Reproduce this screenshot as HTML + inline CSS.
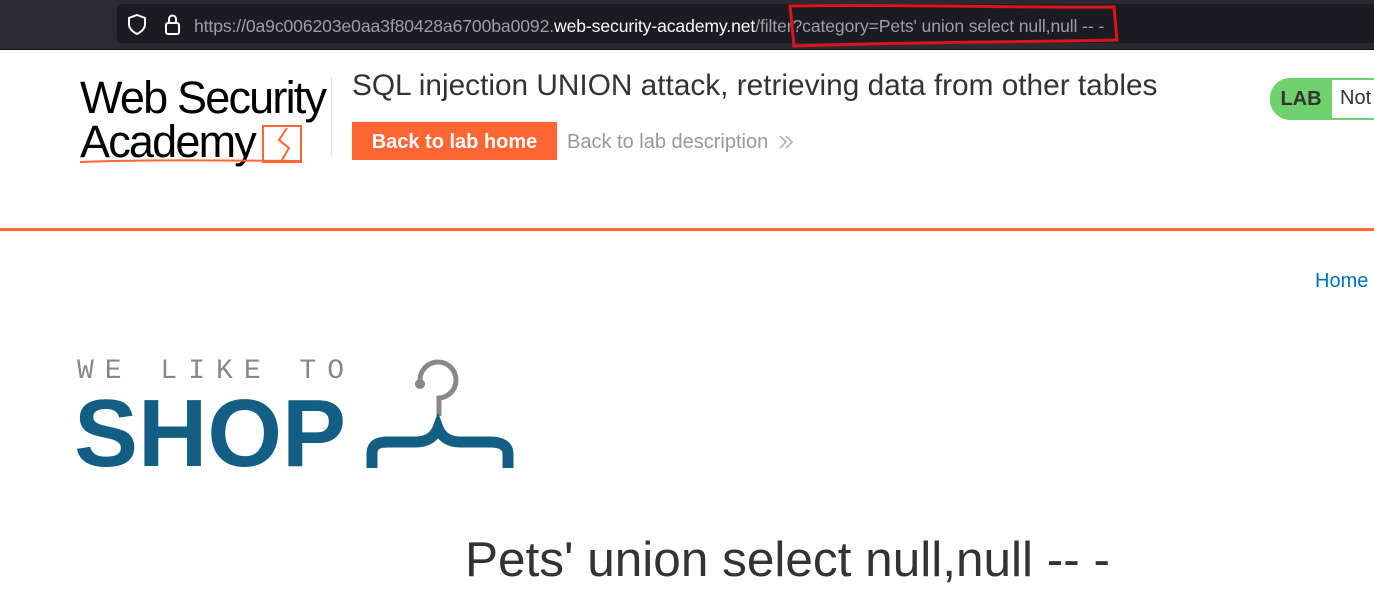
<!DOCTYPE html>
<html><head><style>
body{margin:0;width:1374px;height:605px;overflow:hidden;background:#fff;font-family:"Liberation Sans",sans-serif;position:relative}
.a{position:absolute}
</style></head><body>
<div class="a" style="left:0;top:0;width:1374px;height:49px;background:#2b2a33"></div>
<div class="a" style="left:117px;top:4px;width:1257px;height:39px;background:#1c1b22;border-radius:5px 0 0 5px"></div>
<div class="a" style="left:0;top:49px;width:1374px;height:1px;background:#0c0c0d"></div>
<svg class="a" style="left:124px;top:12px" width="60" height="26"><path d="M13 3 L21 6 V12 C21 17 17 20 13 22 C9 20 5 17 5 12 V6 Z" fill="none" stroke="#fbfbfe" stroke-width="2"/><rect x="42" y="11" width="13" height="11" rx="2" fill="none" stroke="#fbfbfe" stroke-width="2"/><path d="M45 11 V7 a3.5 3.5 0 0 1 7 0 V11" fill="none" stroke="#fbfbfe" stroke-width="2"/></svg>
<div class="a" style="left:194px;top:16px;font-size:17.6px;color:#9e9ea6;white-space:nowrap;letter-spacing:-0.12px">https://0a9c006203e0aa3f80428a6700ba0092.<span style="color:#fbfbfe">web-security-academy.net</span>/filter?category=Pets' union select null,null -- -</div>
<svg class="a" style="left:784px;top:2px" width="340" height="46"><path d="M6 4 C100 2 250 6 330 5 L333 38 C250 40 120 40 10 44 Z" fill="none" stroke="#e0121b" stroke-width="3"/></svg>
<div class="a" style="left:80px;top:76px;font-size:45px;line-height:44px;letter-spacing:-1.8px;color:#000">Web Security<br>Academy</div>
<svg class="a" style="left:78px;top:122px" width="230" height="45"><rect x="185" y="4" width="38" height="36" fill="none" stroke="#ff6633" stroke-width="2"/><path d="M209 6 L201 18 L211 26 L204 38" fill="none" stroke="#ff6633" stroke-width="2"/><path d="M2 40 C60 38 120 38 222 39" fill="none" stroke="#ff6633" stroke-width="2"/></svg>
<div class="a" style="left:331px;top:78px;width:1px;height:78px;background:#ddd"></div>
<div class="a" style="left:352px;top:69px;font-size:29.8px;color:#333;white-space:nowrap">SQL injection UNION attack, retrieving data from other tables</div>
<div class="a" style="left:352px;top:122px;width:205px;height:38px;background:#ff6633;color:#fff;font-weight:bold;font-size:20px;line-height:40px;text-align:center">Back to lab home</div>
<div class="a" style="left:567px;top:131px;font-size:20px;color:#999;white-space:nowrap">Back to lab description</div>
<svg class="a" style="left:778px;top:134px" width="16" height="16"><path d="M2 2 L8 8 L2 14 M8 2 L14 8 L8 14" fill="none" stroke="#aaa" stroke-width="1.5"/></svg>
<div class="a" style="left:1270px;top:78px;width:120px;height:38px;border:2px solid #70d16d;border-radius:20px;background:#fff;overflow:hidden"></div>
<div class="a" style="left:1270px;top:78px;width:62px;height:42px;background:#70d16d;border-radius:21px 0 0 21px;font-weight:bold;font-size:20px;line-height:42px;text-align:center;color:#333">LAB</div>
<div class="a" style="left:1340px;top:87px;font-size:20px;color:#333">Not</div>
<div class="a" style="left:0;top:228px;width:1374px;height:3px;background:#ff6633"></div>
<div class="a" style="left:1315px;top:270px;font-size:20px;color:#0071bc">Home</div>
<div class="a" style="left:77px;top:356px;font-family:'Liberation Mono',monospace;font-size:28px;letter-spacing:11px;color:#888">WE LIKE TO</div>
<div class="a" style="left:74px;top:379px;font-size:96px;font-weight:bold;color:#135f84;letter-spacing:0px;line-height:110px">SHOP</div>
<svg class="a" style="left:360px;top:358px" width="160" height="112"><circle cx="60" cy="26" r="5" fill="#888"/><path d="M60 22 A18 18 0 1 1 79 40 L79 58" fill="none" stroke="#888" stroke-width="5"/><path d="M12 110 V96 C12 88 16 84 28 84 H55 C68 84 75 78 78 70 C81 78 88 84 101 84 H130 C142 84 148 88 148 96 V110" fill="none" stroke="#135f84" stroke-width="11"/></svg>
<div class="a" style="left:465px;top:531px;font-size:49.5px;color:#333;white-space:nowrap">Pets' union select null,null -- -</div>
</body></html>
